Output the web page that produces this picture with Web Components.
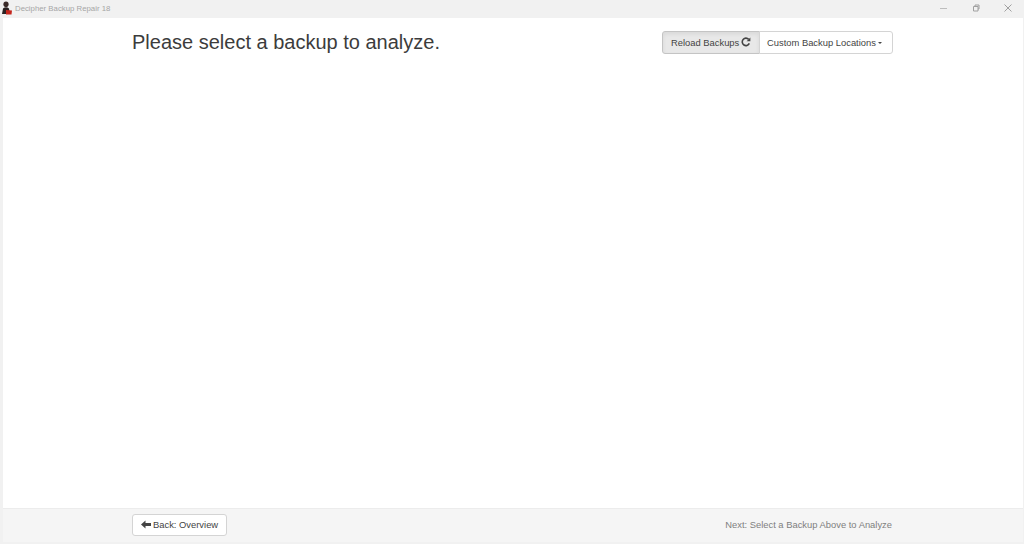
<!DOCTYPE html>
<html>
<head>
<meta charset="utf-8">
<title>Decipher Backup Repair 18</title>
<style>
  html, body { margin: 0; height: 100%; }
  body { background: #f1f1f1; font-family: "Liberation Sans", Arial, sans-serif; overflow: hidden; }
</style>
</head>
<body>
<app-window>
  <title-bar slot="title">Decipher Backup Repair 18</title-bar>
  <page-header slot="main">
    Please select a backup to analyze.
    <backup-toolbar slot="actions"></backup-toolbar>
  </page-header>
  <page-footer slot="footer"></page-footer>
</app-window>

<script>
class AppWindow extends HTMLElement {
    constructor() {
        super();
        this.attachShadow({ mode: 'open' });
        this.shadowRoot.innerHTML = `
            <style>
                :host { display: flex; flex-direction: column; width: 1024px; height: 544px; background: #f1f1f1; box-sizing: border-box; padding: 0 1px 2px 3px; }
                main { flex: 1; background: #fff; }
            </style>
            <slot name="title"></slot>
            <main><slot name="main"></slot></main>
            <slot name="footer"></slot>
        `;
    }
}

class TitleBar extends HTMLElement {
    constructor() {
        super();
        this.attachShadow({ mode: 'open' });
        this.shadowRoot.innerHTML = `
            <style>
                :host { display: flex; align-items: center; height: 18px; box-sizing: border-box; padding-bottom: 2px; margin-left: -3px; margin-right: -1px; font-size: 7.8px; color: #a6a6a6; }
                svg { display: block; flex: none; }
                .logo { width: 12px; height: 14px; margin: 0 2px 0 1px; }
                .name { flex: 1; }
                .controls { display: flex; align-items: center; }
                .controls svg { width: 8px; height: 8px; }
                .min { margin-right: 24px; }
                .max { margin-right: 24px; }
                .close { margin-right: 12px; }
            </style>
            <svg class="logo" viewBox="0 0 12 14">
                <ellipse cx="5" cy="3.2" rx="2.6" ry="2.8" fill="#3a2a28"/>
                <path d="M1 13 L2 7.5 Q5 5 8 7.5 L9 13 Z" fill="#2a2222"/>
                <path d="M5 9 L11 9.5 L10.5 13.5 L5 13.5 Z" fill="#c4261d"/>
            </svg>
            <span class="name"><slot></slot></span>
            <div class="controls">
                <svg class="min" viewBox="0 0 8 8"><path d="M0 4.5H7" stroke="#bdbdbd" fill="none"/></svg>
                <svg class="max" viewBox="0 0 8 8"><path d="M1.5 2.5h4.5v4.5h-4.5zM3 2.5V1h4v4h-1" stroke="#a0a0a0" fill="none"/></svg>
                <svg class="close" viewBox="0 0 8 8"><path d="M.5 .5L7.5 7.5M7.5 .5L.5 7.5" stroke="#a0a0a0" fill="none"/></svg>
            </div>
        `;
    }
}

class PageHeader extends HTMLElement {
    constructor() {
        super();
        this.attachShadow({ mode: 'open' });
        this.shadowRoot.innerHTML = `
            <style>
                :host { display: flex; justify-content: space-between; align-items: flex-start; padding: 11px 130px 0 129px; }
                h1 { margin: 0; font-size: 20px; font-weight: 400; line-height: 27px; color: #3c3c3c; }
                .actions { padding-top: 2px; }
            </style>
            <h1><slot></slot></h1>
            <div class="actions"><slot name="actions"></slot></div>
        `;
    }
}

class BackupToolbar extends HTMLElement {
    constructor() {
        super();
        this.attachShadow({ mode: 'open' });
        this.shadowRoot.innerHTML = `
            <style>
                :host { display: flex; }
                button { font: 9.4px "Liberation Sans", Arial, sans-serif; color: #444; height: 23px; box-sizing: border-box; border: 1px solid #d4d4d4; background: #fff; padding: 0 8px; display: flex; align-items: center; white-space: nowrap; }
                .reload { width: 98px; background: #e8e8e8; border-color: #c4c4c4; border-radius: 3px 0 0 3px; box-shadow: inset 0 2px 4px rgba(0,0,0,.07); gap: 2px; padding-bottom: 1px; }
                .custom { width: 134px; margin-left: -1px; border-radius: 0 3px 3px 0; gap: 2px; padding: 0 7px 1px; }
                svg { width: 10px; height: 10px; display: block; flex: none; }
                .caret { width: 0; height: 0; flex: none; border-top: 2.5px solid #444; border-left: 2.5px solid transparent; border-right: 2.5px solid transparent; margin-top: 1px; }
            </style>
            <button class="reload">Reload Backups
                <svg viewBox="0 0 10 10"><path d="M8.3 6.4A3.7 3.7 0 1 1 7.7 2.4" fill="none" stroke="#444" stroke-width="1.6"/><path d="M9.4 .4V4.2H5.6Z" fill="#444"/></svg>
            </button>
            <button class="custom">Custom Backup Locations <span class="caret"></span></button>
        `;
    }
}

class PageFooter extends HTMLElement {
    constructor() {
        super();
        this.attachShadow({ mode: 'open' });
        this.shadowRoot.innerHTML = `
            <style>
                :host { display: flex; justify-content: space-between; align-items: center; height: 34px; box-sizing: border-box; background: #f5f5f5; border-top: 1px solid #ececec; padding: 0 131px 2px 129px; font-size: 9.4px; }
                button { font: 9.4px "Liberation Sans", Arial, sans-serif; color: #444; width: 95px; height: 22px; box-sizing: border-box; border: 1px solid #d4d4d4; border-radius: 3px; background: #fff; padding: 0 8px; display: flex; align-items: center; gap: 2px; white-space: nowrap; }
                svg { width: 10px; height: 9px; display: block; flex: none; }
                .next { color: #808080; }
            </style>
            <button>
                <svg viewBox="0 0 10 9"><path d="M0 4.5L4.5 .5V3H10V6H4.5V8.5Z" fill="#444"/></svg>
                Back: Overview
            </button>
            <span class="next">Next: Select a Backup Above to Analyze</span>
        `;
    }
}

customElements.define('app-window', AppWindow);
customElements.define('title-bar', TitleBar);
customElements.define('page-header', PageHeader);
customElements.define('backup-toolbar', BackupToolbar);
customElements.define('page-footer', PageFooter);
</script>
</body>
</html>
